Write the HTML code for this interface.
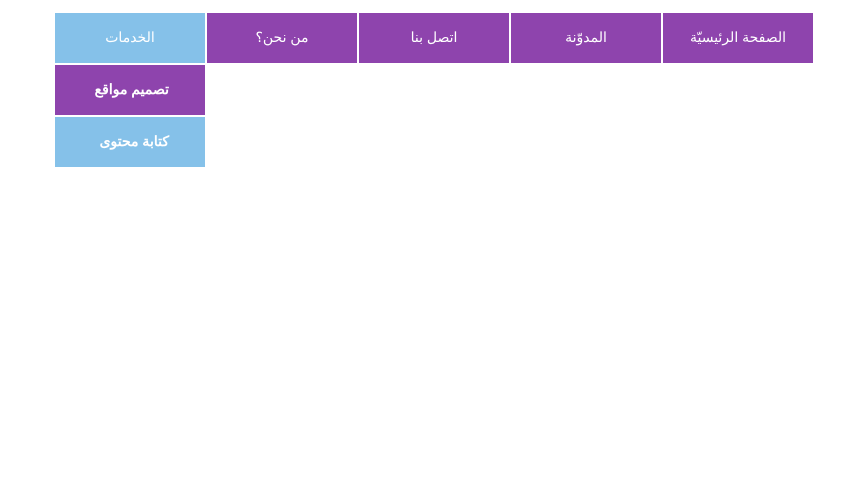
<!DOCTYPE html>
<html lang="ar" dir="rtl">
<head>
<meta charset="utf-8">
<style>
html,body{margin:0;padding:0;background:#fff;width:843px;height:503px;overflow:hidden}
.b{position:absolute;width:150px;height:50px;color:#fff;font-family:"Liberation Sans","Noto Sans CJK SC",sans-serif;font-size:14px;line-height:48px;text-align:center;box-sizing:border-box}
.p{background:#8e44ad}
.l{background:#85c1e9}
.d{text-align:right;padding-right:36px;font-weight:bold}
</style>
</head>
<body>
<div class="b p" style="left:663px;top:13px">الصفحة الرئيسيّة</div>
<div class="b p" style="left:511px;top:13px">المدوّنة</div>
<div class="b p" style="left:359px;top:13px">اتصل بنا</div>
<div class="b p" style="left:207px;top:13px">من نحن؟</div>
<div class="b l" style="left:55px;top:13px">الخدمات</div>
<div class="b p d" style="left:55px;top:65px">تصميم مواقع</div>
<div class="b l d" style="left:55px;top:117px">كتابة محتوى</div>
</body>
</html>
